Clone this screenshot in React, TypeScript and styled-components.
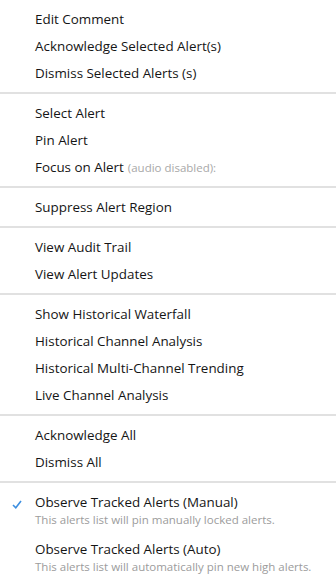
import styled, { createGlobalStyle } from 'styled-components';

const GlobalStyle = createGlobalStyle`
  html, body {
    margin: 0;
    padding: 0;
    background: #ffffff;
  }
  body {
    font-family: "Open Sans", "Noto Sans", sans-serif;
    -webkit-font-smoothing: antialiased;
  }
`;

const Menu = styled.div`
  width: 336px;
  height: 583px;
  display: flex;
  flex-direction: column;
  background: #ffffff;
  padding-top: 6px;
  box-sizing: border-box;
  overflow: hidden;
`;

const Item = styled.div<{ $tall?: boolean }>`
  display: flex;
  align-items: flex-start;
  height: ${({ $tall }) => ($tall ? '47px' : '27px')};
  padding-top: ${({ $tall }) => ($tall ? '4px' : '0')};
  box-sizing: border-box;
`;

const CheckCell = styled.div`
  width: 35px;
  flex: none;
  display: flex;
  justify-content: center;
  padding: 7px 2px 0 0;
  box-sizing: border-box;
`;

const Labels = styled.div`
  display: flex;
  flex-direction: column;
  justify-content: center;
  min-height: 27px;
`;

const Label = styled.span`
  font-size: 13.4px;
  line-height: 19px;
  color: #151515;
  white-space: nowrap;
`;

const Hint = styled.span`
  font-size: 11.5px;
  color: #a8a8a8;
  margin-left: 4px;
`;

const Sub = styled.span`
  font-size: 11.5px;
  line-height: 16px;
  color: #9c9c9c;
  white-space: nowrap;
`;

const Separator = styled.div`
  height: 2px;
  background: #e1e1e1;
  margin: 5px 0 6px;
  flex: none;
`;

const Footer = styled.div`
  margin-top: auto;
  display: flex;
  height: 2px;
  background: #dcdcdc;
`;

const Accent = styled.div`
  width: 22px;
  background: #e84a5f;
`;

type Entry = { label: string; hint?: string; sub?: string; checked?: boolean };

const groups: Entry[][] = [
  [
    { label: 'Edit Comment' },
    { label: 'Acknowledge Selected Alert(s)' },
    { label: 'Dismiss Selected Alerts (s)' },
  ],
  [
    { label: 'Select Alert' },
    { label: 'Pin Alert' },
    { label: 'Focus on Alert', hint: '(audio disabled):' },
  ],
  [{ label: 'Suppress Alert Region' }],
  [{ label: 'View Audit Trail' }, { label: 'View Alert Updates' }],
  [
    { label: 'Show Historical Waterfall' },
    { label: 'Historical Channel Analysis' },
    { label: 'Historical Multi-Channel Trending' },
    { label: 'Live Channel Analysis' },
  ],
  [{ label: 'Acknowledge All' }, { label: 'Dismiss All' }],
  [
    {
      label: 'Observe Tracked Alerts (Manual)',
      sub: 'This alerts list will pin manually locked alerts.',
      checked: true,
    },
    {
      label: 'Observe Tracked Alerts (Auto)',
      sub: 'This alerts list will automatically pin new high alerts.',
    },
  ],
];

function Check() {
  return (
    <svg width="10" height="9" viewBox="0 0 10 9">
      <path d="M1 5 L3.8 7.8 L9 1" fill="none" stroke="#3d8fe0" strokeWidth="1.6" />
    </svg>
  );
}

export default function App() {
  return (
    <>
      <GlobalStyle />
      <Menu>
        {groups.map((group, gi) => (
          <div key={gi}>
            {gi > 0 && <Separator />}
            {group.map((e) => (
              <Item key={e.label} $tall={!!e.sub}>
                <CheckCell>{e.checked && <Check />}</CheckCell>
                <Labels>
                  <Label>
                    {e.label}
                    {e.hint && <Hint>{e.hint}</Hint>}
                  </Label>
                  {e.sub && <Sub>{e.sub}</Sub>}
                </Labels>
              </Item>
            ))}
          </div>
        ))}
        <Footer>
          <Accent />
        </Footer>
      </Menu>
    </>
  );
}
